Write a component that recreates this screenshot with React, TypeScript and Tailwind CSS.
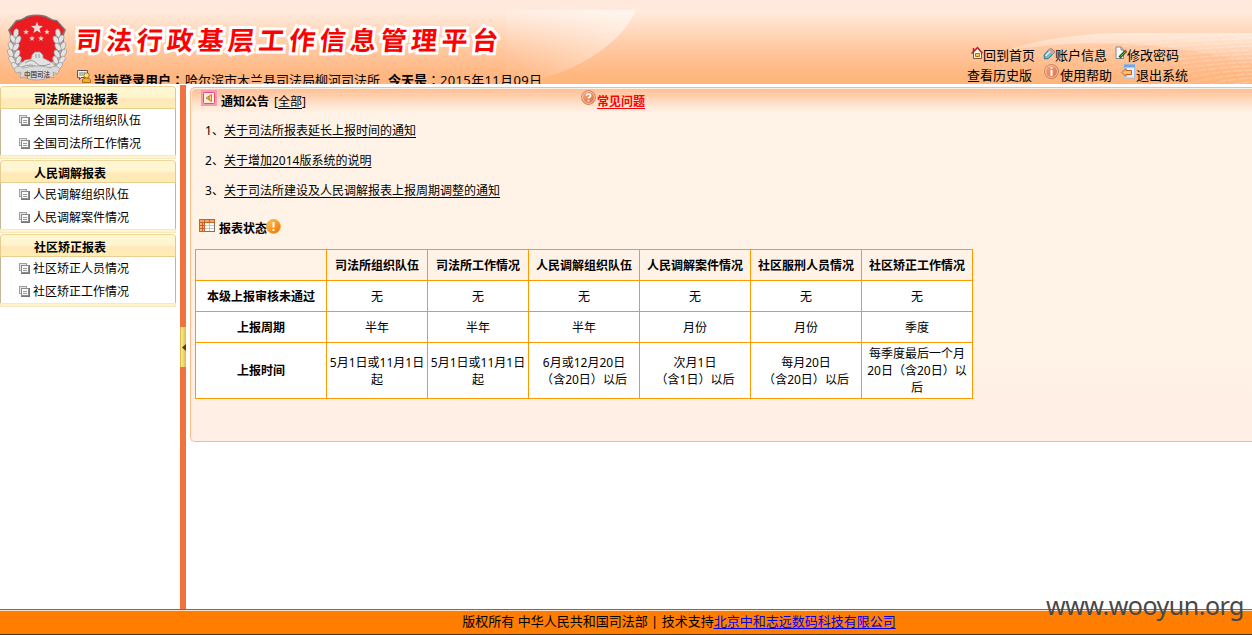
import React from "react";

const FONT = "font-['Noto_Sans','Noto_Sans_CJK_SC',sans-serif]";

function Star({ x, y, r }: { x: number; y: number; r: number }) {
  const pts = Array.from({ length: 10 }, (_, i) => {
    const a = (Math.PI / 5) * i - Math.PI / 2;
    const q = i % 2 ? r * 0.42 : r;
    return `${x + q * Math.cos(a)},${y + q * Math.sin(a)}`;
  }).join(" ");
  return <polygon points={pts} fill="#f3d9d2" />;
}

function Emblem() {
  const leaves = [
    [9, 20, 10], [6, 26, -25], [11, 27, 25], [4, 33, -20], [9, 34, 30], [3.5, 40, -25],
    [10, 41, 25], [5, 47, -35], [11.5, 47, 20], [8, 53, -45], [14, 53, 10],
  ];
  const side = (k: string) => (
    <g key={k}>
      <path d="M10 20 C5 32 5 46 15 57" fill="none" stroke="#a9a19f" strokeWidth="3" />
      {leaves.map(([x, y, r], i) => (
        <ellipse key={i} cx={x} cy={y} rx="2.500" ry="4.300" transform={`rotate(${r} ${x} ${y})`} fill="#e4e4e4" stroke="#909090" strokeWidth=".6" />
      ))}
    </g>
  );
  return (
    <svg className="block h-[68px] w-[60px]" viewBox="0 0 60 68">
      <path d="M9 7 C15 7 17 4 21 2.500 Q30 .3 38 2.500 C42 4 45 7 50 7 L59 17 Q56 22 57 29 Q59 50 48 56 L30 61 L12 56 Q1 50 3 29 Q4 22 1 17Z" fill="#84706f" />
      <path d="M10 8.500 C15 8 18 5.500 22 4 Q30 2 37 4 C41 5.500 45 8.500 50 8.500 L57 17 Q54 22 55 29 Q57 48 46 54 L30 58 L14 54 Q3 48 5 29 Q6 22 3 17Z" fill="#ea1c22" />
      {side("l")}
      <g transform="translate(60 0) scale(-1 1)">{side("r")}</g>
      <Star x={30} y={15} r={6.3} />
      <Star x={19} y={19} r={3} />
      <Star x={40} y={19} r={3} />
      <Star x={25} y={25.500} r={3} />
      <Star x={34} y={25.500} r={3} />
      <path d="M25 42 L28 39 H33 L36 42 V45 L42 48 L48 52 L43 58 H17 L11 53 L18 47 L24 46Z" fill="#e2e2e2" stroke="#989898" strokeWidth=".7" />
      <path d="M29 41V45 M32 41V45 M18 50 Q25 45 29 50 T43 51 M15 54 Q24 50 29 54 T44 54" fill="none" stroke="#999" strokeWidth="1" />
      <path d="M7 56 Q11 51 16 55 Q30 51 44 55 Q49 51 53 56 L50 61 L46 59 L47 65 Q43 63 41 65 Q30 69 19 65 Q16 63 13 65 L14 59 L9 60Z" fill="#dadada" stroke="#9b9b9b" strokeWidth=".7" />
      <text x="30" y="63.500" textAnchor="middle" fontSize="6.500" fontWeight="700" fill="#555" fontFamily="Noto Sans CJK SC">中国司法</text>
    </svg>
  );
}

function UserIcon() {
  return (
    <svg className="mt-[-1px] h-4 w-4 shrink-0" viewBox="0 0 16 16">
      <path d="M1.500 1.500H11.500V8.500H5L3.500 10.500V8.500H1.500Z" fill="#f6f6f0" stroke="#555" />
      <path d="M3 4H9M3 6H7" stroke="#777" />
      <circle cx="10.500" cy="6.500" r="2.700" fill="#ffdc79" stroke="#8b5a12" strokeWidth=".8" />
      <path d="M6.500 13.500V11Q7 9 10.500 9T14.500 11V13.500Z" fill="#f7b21b" stroke="#95600c" strokeWidth=".8" />
    </svg>
  );
}

function HomeIcon() {
  return (
    <svg className="mt-px h-[14px] w-3 shrink-0" viewBox="0 0 12 14">
      <path d="M2.500 6V12.500H10.500V6L6.500 2Z" fill="#fff9e7" stroke="#7a5542" />
      <path d="M.5 7.500L6.500 1.500L11.500 7.500M2.500 2V5" fill="none" stroke="#b91f30" strokeWidth="1.500" />
      <path d="M4.500 7.500H8.500V10.500H4.500Z" fill="#f8cf4d" stroke="#a87510" />
    </svg>
  );
}

function PencilIcon() {
  return (
    <svg className="mt-[2px] h-[14px] w-3 shrink-0" viewBox="0 0 12 14">
      <path d="M1 8L6.500 2Q10.500 1.500 11.500 5.500L5.500 11.500L1.500 12Z" fill="#72b9c8" stroke="#397584" />
      <path d="M6.500 2Q10.500 1.500 11.500 5.500L9.500 7.500L5 4Z" fill="#d9a199" />
      <path d="M2.500 9L7 4.500" stroke="#d6f2f4" strokeWidth="1.500" />
    </svg>
  );
}

function EditIcon() {
  return (
    <svg className="mt-px h-[14px] w-3 shrink-0" viewBox="0 0 12 14">
      <path d="M1 1H6L8.500 4V12.500H1Z" fill="#fafafa" stroke="#858585" />
      <path d="M6 1.500V4H8.500" fill="none" stroke="#858585" />
      <path d="M4.500 11.500L11 5" stroke="#235623" strokeWidth="3" />
      <path d="M5.500 10.500L11 5" stroke="#7dbb51" strokeWidth="1" />
      <path d="M9.700 6.200L11.500 4.500" stroke="#d34231" strokeWidth="2.500" />
    </svg>
  );
}

function RoundIcon({ kind }: { kind: "info" | "help" | "warn" }) {
  const warn = kind === "warn";
  return (
    <svg className="h-[15px] w-[15px] shrink-0" viewBox="0 0 15 15">
      <defs>
        <linearGradient id={`round-${kind}`} x1="0" y1="0" x2="1" y2="1">
          <stop stopColor={warn ? "#ffcb55" : "#f5a982"} />
          <stop offset="1" stopColor={warn ? "#ee6a00" : "#dc6f3d"} />
        </linearGradient>
      </defs>
      <circle cx="7.500" cy="7.500" r="6.900" fill={`url(#round-${kind})`} stroke={warn ? "#f79b20" : "#b96e4c"} strokeWidth=".8" />
      {!warn && <circle cx="7.500" cy="7.500" r="6" fill="none" stroke="#ffd4bb" strokeWidth=".8" />}
      {kind === "help" && <path d="M5.300 5.700Q5.500 4 7.500 4Q9.700 4 9.500 5.800Q9.300 7 7.500 7.700V8.500M7.500 10V11.500" fill="none" stroke="#fff" strokeWidth="1.700" />}
      {kind === "info" && <path d="M7.500 3V4.800M7.500 6V12" stroke="#fff" strokeWidth="2" />}
      {warn && <path d="M7.500 3V8.500M7.500 10V12" stroke="#fff" strokeWidth="2" />}
    </svg>
  );
}

function ExitIcon() {
  return (
    <svg className="h-[15px] w-[14px] shrink-0" viewBox="0 0 14 15">
      <rect x="3.500" y="1" width="10" height="13" fill="#e5f0fc" stroke="#a2c2eb" />
      <rect x="3" y=".5" width="11" height="3" fill="#68a8ed" />
      <path d="M1 8.500L5 4.500V6.500H10.500V10.500H5V12.500Z" fill="#ffc179" stroke="#c65d12" />
    </svg>
  );
}

function NoticeIcon() {
  return (
    <svg className="h-4 w-4 shrink-0" viewBox="0 0 16 16">
      <rect width="16" height="16" fill="#f899ae" />
      <rect x="2.500" y="2.500" width="11" height="11" rx="1" fill="#fff0df" stroke="#ea4777" />
      <path d="M5 8L10.500 4.500V11.500Z" fill="#ffd16b" stroke="#c98026" />
      <path d="M8 6V10" stroke="#9c723c" />
    </svg>
  );
}

function TableIcon() {
  return (
    <svg className="h-[14px] w-4 shrink-0" viewBox="0 0 16 14" shapeRendering="crispEdges">
      <rect width="16" height="13" fill="#c4642a" />
      <path d="M1 1H5V3H1ZM6 1H10V3H6ZM11 1H15V3H11Z" fill="#f7a66b" />
      <path d="M1 4H3V6H1ZM4 4H5V6H4ZM1 7H3V9H1ZM4 7H5V9H4ZM1 10H3V12H1ZM4 10H5V12H4Z" fill="#ffb070" />
      <path d="M6 4H15V12H6Z" fill="#c7c7bb" />
      <path d="M6 4H10V6H6ZM11 4H15V6H11ZM6 7H10V9H6ZM11 7H15V9H11ZM6 10H10V12H6ZM11 10H15V12H11Z" fill="#fff" />
      <path d="M6 12.500H15.500V4" fill="none" stroke="#77756b" />
    </svg>
  );
}

function CopyIcon() {
  return (
    <svg className="mt-[-1px] h-[11px] w-[11px] shrink-0" viewBox="0 0 11 11" shapeRendering="crispEdges">
      <path d="M.5 .5H7.500V7.500H.5Z" fill="#e6e6e6" stroke="#a0a0a0" />
      <path d="M2.500 2.500H9.500V9.500H2.500Z" fill="#fafafa" stroke="#8b8b8b" />
      <path d="M10 2V10H2" fill="none" stroke="#777" />
      <path d="M4 5.500H8M4 7.500H8" stroke="#999" />
    </svg>
  );
}

function HeaderArt() {
  return (
    <svg className="absolute inset-0 h-[84px] w-[1252px]" viewBox="0 0 1252 84">
      <defs>
        <linearGradient id="leaf" gradientUnits="userSpaceOnUse" x1="520" y1="70" x2="610" y2="10">
          <stop stopColor="#fff" stopOpacity=".05" />
          <stop offset="1" stopColor="#fff" stopOpacity=".5" />
        </linearGradient>
        <linearGradient id="fan" x1="0" y1="0" x2="1" y2="0">
          <stop stopColor="#fff" stopOpacity=".03" />
          <stop offset="1" stopColor="#fff" stopOpacity=".26" />
        </linearGradient>
        <linearGradient id="fanEdge" x1="0" y1="0" x2="0" y2="1">
          <stop stopColor="#fff" stopOpacity=".5" />
          <stop offset="1" stopColor="#fff" stopOpacity="0" />
        </linearGradient>
      </defs>
      <path d="M506 10H636C625 36 592 64 543 78L506 84Z" fill="url(#leaf)" />
      <path d="M1000 52Q1055 33 1130 33H1252V63Q1120 30 1000 52Z" fill="url(#fanEdge)" />
      {Array.from({ length: 13 }, (_, i) => (
        <path key={i} d={`M${1010 + i * 14} ${54 + i * 4}Q${1110 + i * 10} ${40 + i * 3.5} 1252 ${34 + i * 4}`} stroke="url(#fan)" strokeWidth="1.500" strokeDasharray="9 2" fill="none" />
      ))}
    </svg>
  );
}

const groups = [
  { title: "司法所建设报表", items: ["全国司法所组织队伍", "全国司法所工作情况"] },
  { title: "人民调解报表", items: ["人民调解组织队伍", "人民调解案件情况"] },
  { title: "社区矫正报表", items: ["社区矫正人员情况", "社区矫正工作情况"] },
];

const notices = [
  "关于司法所报表延长上报时间的通知",
  "关于增加2014版系统的说明",
  "关于司法所建设及人民调解报表上报周期调整的通知",
];

const columns = ["司法所组织队伍", "司法所工作情况", "人民调解组织队伍", "人民调解案件情况", "社区服刑人员情况", "社区矫正工作情况"];

const rows: { label: string; height: string; cells: string[][] }[] = [
  { label: "本级上报审核未通过", height: "h-[31px]", cells: [["无"], ["无"], ["无"], ["无"], ["无"], ["无"]] },
  { label: "上报周期", height: "h-[31px]", cells: [["半年"], ["半年"], ["半年"], ["月份"], ["月份"], ["季度"]] },
  {
    label: "上报时间",
    height: "h-[56px]",
    cells: [
      ["5月1日或11月1日", "起"],
      ["5月1日或11月1日", "起"],
      ["6月或12月20日", "（含20日）以后"],
      ["次月1日", "（含1日）以后"],
      ["每月20日", "（含20日）以后"],
      ["每季度最后一个月", "20日（含20日）以", "后"],
    ],
  },
];

/* Full-width brackets and colons sit in the middle of their cell. */
function Centred({ text }: { text: string }) {
  return (
    <>
      {text.split(/([（）：])/).map((part, i) =>
        i % 2 ? (
          <span key={i} lang="zh-TW" className="font-['Noto_Sans_CJK_TC',sans-serif] leading-none">{part}</span>
        ) : (
          part
        ),
      )}
    </>
  );
}

function Header() {
  return (
    <header className="relative h-[84px] shrink-0 overflow-hidden bg-[linear-gradient(#ffe9dc_0px,#ffeadc_12px,#ffdcc3_27px,#ffc79f_50px,#ffb67f_76px,#ffb57e_84px)]">
      <HeaderArt />
      <div className="relative flex h-[84px] items-start">
        <div className="ml-[7px] mt-[13px]"><Emblem /></div>
        <div className="ml-[9px] w-[880px] shrink-0">
          <h1 className="mt-[18px] h-[42px] -skew-x-6 whitespace-nowrap font-['Noto_Sans_CJK_SC',sans-serif] text-[26px] leading-[42px] font-bold tracking-[4.500px] text-[#fe0000] [-webkit-text-stroke:6px_white] [paint-order:stroke_fill]">
            司法行政基层工作信息管理平台
          </h1>
          <div className="mt-[10px] flex h-5 items-start whitespace-pre text-[13px] leading-5">
            <UserIcon />
            <b className="ml-px w-[92px] shrink-0"><Centred text="当前登录用户：" /></b>
            <span className="w-[203px] shrink-0">哈尔滨市木兰县司法局柳河司法所</span>
            <b>今天是</b>
            <span className="w-[13px]"><Centred text="：" /></span>
            <span className="tracking-[0.35px]">2015年11月09日</span>
          </div>
        </div>
        <nav className="mt-[45px] ml-[11px] whitespace-nowrap text-[13px] leading-5">
          <div className="flex h-5 pl-[4px]">
            <a className="flex w-[72px]"><HomeIcon />回到首页</a>
            <a className="flex w-[72px]"><PencilIcon />账户信息</a>
            <a className="flex"><EditIcon />修改密码</a>
          </div>
          <div className="flex h-5">
            <a className="w-[77px]">查看历史版</a>
            <a className="flex w-[77px]"><span className="mt-[-1px] flex w-4 shrink-0"><RoundIcon kind="info" /></span>使用帮助</a>
            <a className="flex"><span className="mt-[-1px] flex w-[15px] shrink-0"><ExitIcon /></span>退出系统</a>
          </div>
        </nav>
      </div>
    </header>
  );
}

function Sidebar() {
  return (
    <aside className="w-[180px] shrink-0 pt-[2px]">
      {groups.map((g) => (
        <section key={g.title} className="h-[74px] w-[176px]">
          <h2 className="h-[23px] rounded-t-[4px] border border-t-[#eed799] border-r-[#e3ca85] border-b-[#e9cf96] border-l-[#e7cd8b] bg-[linear-gradient(#fff8d6_0px,#fff4cc_10px,#ffe8bb_12px,#ffedb2_21px)] pl-[33px] text-xs leading-[25px] font-bold">
            {g.title}
          </h2>
          <ul className="h-[46px] border-x border-[#c4b796] bg-white">
            {g.items.map((item) => (
              <li key={item} className="flex h-[23px] items-center gap-[3px] pl-[18px] text-xs leading-[23px]">
                <CopyIcon />
                {item}
              </li>
            ))}
          </ul>
          <div className="h-[4px] border border-[#fbe8bc] bg-[#fff4cd]" />
        </section>
      ))}
    </aside>
  );
}

function StatusTable() {
  return (
    <table className="ml-[4px] mt-[11px] w-[778px] table-fixed border-collapse text-center text-xs leading-[17px]">
      <colgroup>
        <col className="w-[131px]" />
        <col className="w-[101px]" />
        <col className="w-[101px]" />
        <col className="w-[111px]" />
        <col className="w-[111px]" />
        <col className="w-[111px]" />
        <col className="w-[111px]" />
      </colgroup>
      <thead>
        <tr className="h-[31px]">
          <th className="border border-[#ff9900] p-0" />
          {columns.map((c) => (
            <th key={c} className="border border-[#ff9900] p-0 pt-px font-bold">{c}</th>
          ))}
        </tr>
      </thead>
      <tbody className="bg-white">
        {rows.map((r) => (
          <tr key={r.label} className={r.height}>
            <th className="border border-[#ff9900] p-0 font-bold">{r.label}</th>
            {r.cells.map((lines, i) => (
              <td key={i} className="border border-[#ff9900] p-0 whitespace-nowrap">
                {lines.map((l) => <div key={l} className="h-[17px]"><Centred text={l} /></div>)}
              </td>
            ))}
          </tr>
        ))}
      </tbody>
    </table>
  );
}

function Content() {
  return (
    <main className="h-[355px] w-[1062px] rounded-l-[5px] border-y border-l border-[#ffb986] bg-[linear-gradient(#ffc094_0px,#ffceac_8px,#ffe5d2_17px,#fff2e6_25px,#fff2e6_280px,#ffefe5_310px,#ffefe5_350px)] shadow-[inset_1px_1px_#fff0e4]">
      <div className="flex h-[30px] pl-[10px] text-xs">
        <span className="mt-[2px]"><NoticeIcon /></span>
        <b className="mt-[5px] ml-1 leading-[17px]">通知公告</b>
        <span className="mt-[5px] ml-[5px] leading-[17px]">[<u className="underline-offset-2">全部</u>]</span>
        <span className="mt-[2px] ml-[275px]"><RoundIcon kind="help" /></span>
        <a className="mt-[5px] ml-px leading-[17px] font-bold text-[#ff0000] underline underline-offset-2">常见问题</a>
      </div>
      <ol className="pl-[14px] text-xs">
        {notices.map((n, i) => (
          <li key={n} className="flex h-[30px] items-start leading-[25px]">
            <span className="w-[19px]">{i + 1}、</span>
            <a className="underline underline-offset-2">{n}</a>
          </li>
        ))}
      </ol>
      <div className="flex h-[30px] items-start pl-[8px] text-xs">
        <span className="mt-[11px]"><TableIcon /></span>
        <b className="mt-[12px] ml-1 leading-[17px]">报表状态</b>
        <span className="mt-[11px] ml-[-1px]"><RoundIcon kind="warn" /></span>
      </div>
      <StatusTable />
    </main>
  );
}

export default function App() {
  return (
    <div lang="zh-CN" className={`relative flex h-[635px] w-[1252px] flex-col overflow-hidden bg-white text-black ${FONT}`}>
      <Header />
      <div className="flex h-[525px] shrink-0">
        <Sidebar />
        <div className="mt-px flex h-[524px] w-[6px] shrink-0 items-start bg-[#f0733d] pt-[242px]">
          <button aria-label="收起" className="flex h-10 w-[6px] items-center justify-center border-l border-[#ddb947] bg-[linear-gradient(90deg,#fff08c,#e0b94f)]">
            <svg className="h-[7px] w-1" viewBox="0 0 4 7"><path d="M4 0V7L0 3.500Z" fill="#693300" /></svg>
          </button>
        </div>
        <div className="pt-[3px] pl-1"><Content /></div>
      </div>
      <footer className="flex h-[26px] shrink-0 justify-center border-t border-b border-t-[#8b6651] border-b-[#4d3415] bg-[#ff7d00] pl-[106px] text-[13px] leading-[23px] shadow-[inset_0_1px_#ffe2c6]">
        <span className="whitespace-pre">版权所有 中华人民共和国司法部 | 技术支持<a className="text-[#0000ee] underline underline-offset-2">北京中和志远数码科技有限公司</a></span>
      </footer>
      <div className="absolute top-[588px] left-[1046px] text-[25px] leading-[34px] tracking-[-0.5px] whitespace-nowrap text-[#484848]">www.wooyun.org</div>
    </div>
  );
}
